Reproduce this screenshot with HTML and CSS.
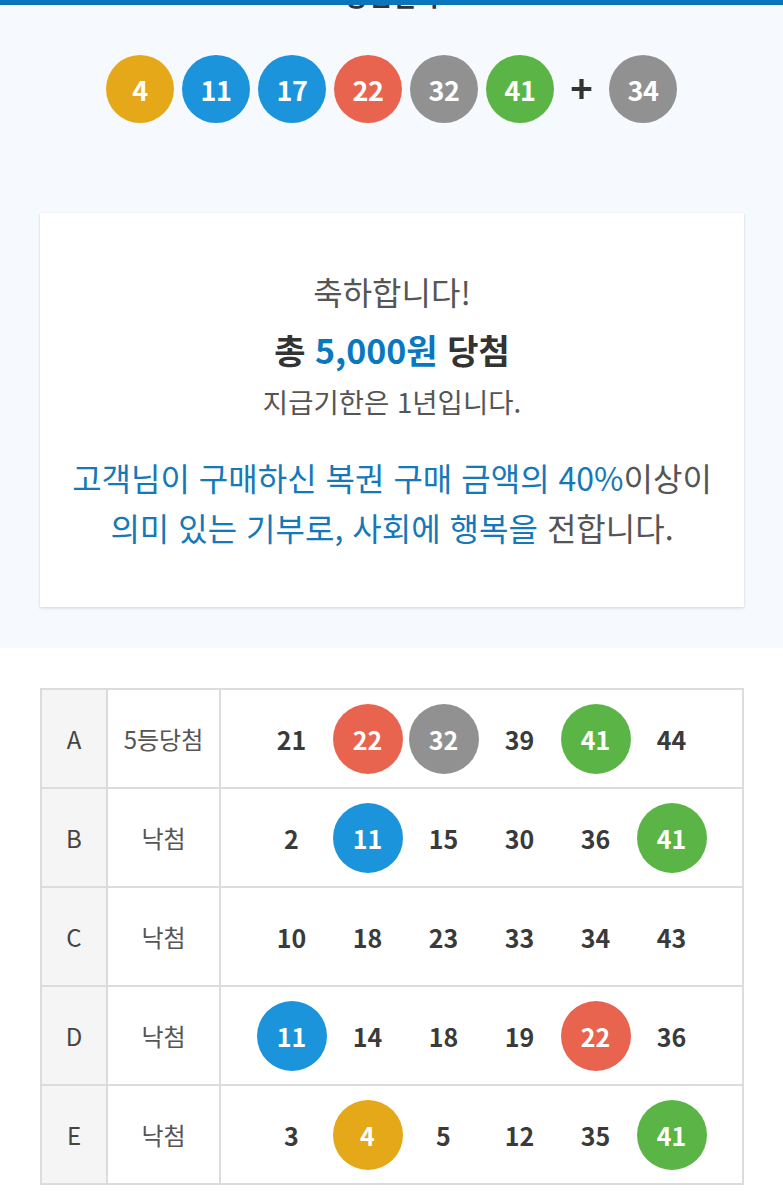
FILE: index.html
```html
<!DOCTYPE html>
<html lang="ko">
<head>
<meta charset="utf-8">
<title>당첨결과</title>
<link rel="stylesheet" href="styles.css">
</head>
<body>
<div class="topbar"></div>
<section class="result">
  <h2 class="title">당첨결과</h2>
  <div class="balls">
    <span class="ball c1">4</span>
    <span class="ball c2">11</span>
    <span class="ball c2">17</span>
    <span class="ball c3">22</span>
    <span class="ball c4">32</span>
    <span class="ball c5">41</span>
    <span class="plus">+</span>
    <span class="ball c4">34</span>
  </div>
  <div class="card">
    <p class="congrats">축하합니다!</p>
    <p class="total">총 <span class="amount">5,000원</span> 당첨</p>
    <p class="limit">지급기한은 1년입니다.</p>
    <p class="donate"><span class="blue">고객님이 구매하신 복권 구매 금액의 40%</span>이상이<br><span class="blue">의미 있는 기부로, 사회에 행복을</span> 전합니다.</p>
  </div>
</section>
<section class="tickets">
  <table class="ticket-table">
    <colgroup><col class="col-id"><col class="col-rank"><col></colgroup>
    <tr>
      <td class="id">A</td><td class="rank">5등당첨</td>
      <td><div class="nums"><span class="slot">21</span><span class="slot"><span class="mini c3">22</span></span><span class="slot"><span class="mini c4">32</span></span><span class="slot">39</span><span class="slot"><span class="mini c5">41</span></span><span class="slot">44</span></div></td>
    </tr>
    <tr>
      <td class="id">B</td><td class="rank">낙첨</td>
      <td><div class="nums"><span class="slot">2</span><span class="slot"><span class="mini c2">11</span></span><span class="slot">15</span><span class="slot">30</span><span class="slot">36</span><span class="slot"><span class="mini c5">41</span></span></div></td>
    </tr>
    <tr>
      <td class="id">C</td><td class="rank">낙첨</td>
      <td><div class="nums"><span class="slot">10</span><span class="slot">18</span><span class="slot">23</span><span class="slot">33</span><span class="slot">34</span><span class="slot">43</span></div></td>
    </tr>
    <tr>
      <td class="id">D</td><td class="rank">낙첨</td>
      <td><div class="nums"><span class="slot"><span class="mini c2">11</span></span><span class="slot">14</span><span class="slot">18</span><span class="slot">19</span><span class="slot"><span class="mini c3">22</span></span><span class="slot">36</span></div></td>
    </tr>
    <tr>
      <td class="id">E</td><td class="rank">낙첨</td>
      <td><div class="nums"><span class="slot">3</span><span class="slot"><span class="mini c1">4</span></span><span class="slot">5</span><span class="slot">12</span><span class="slot">35</span><span class="slot"><span class="mini c5">41</span></span></div></td>
    </tr>
  </table>
</section>
</body>
</html>
```
FILE: styles.css
```css
* { box-sizing: border-box; }
html, body { margin: 0; padding: 0; }
body {
  font-family: "Noto Sans CJK KR", "Noto Sans", sans-serif;
  color: #333;
  background: #fff;
  overflow: hidden;
}
.topbar {
  position: absolute;
  top: 0; left: 0; right: 0;
  height: 5px;
  background: #0a75bd;
  z-index: 2;
}
.result {
  background: #f6f9fd;
  padding: 0 39px 41px 40px;
  overflow: hidden;
}
.title {
  margin: -22px 0 0;
  font-size: 26px;
  line-height: 34px;
  font-weight: 700;
  text-align: center;
  color: #333;
}
.balls {
  display: flex;
  justify-content: center;
  align-items: center;
  gap: 8px;
  margin-top: 43px;
  margin-left: -1px;
}
.ball {
  width: 68px; height: 68px;
  border-radius: 50%;
  display: flex; align-items: center; justify-content: center;
  color: #fff;
  font-size: 27px;
  font-weight: 700;
  letter-spacing: -0.5px;
}
.plus {
  width: 39px;
  text-align: center;
  font-size: 38px;
  font-weight: 700;
  color: #333;
  line-height: 1;
  margin-top: -4px;
}
.c1 { background: #e5a818; }
.c2 { background: #1b94db; }
.c3 { background: #e8644f; }
.c4 { background: #919191; }
.c5 { background: #5bb546; }
.card {
  margin-top: 90px;
  background: #fff;
  box-shadow: 0 1px 3px rgba(0,0,0,0.16);
  padding: 56px 10px 55px;
  text-align: center;
}
.card p { margin: 0; }
.congrats {
  font-size: 32px;
  line-height: 44px;
  color: #555;
}
.total {
  margin-top: 15px !important;
  font-size: 34px;
  line-height: 44px;
  font-weight: 700;
  color: #333;
}
.amount { color: #0a78bf; }
.limit {
  margin-top: 12px !important;
  font-size: 27.5px;
  line-height: 34px;
  color: #555;
}
.donate {
  margin-top: 34px !important;
  font-size: 32px;
  line-height: 50px;
  color: #555;
}
.blue { color: #1478b9; }
.tickets {
  padding: 40px 39px 0 40px;
}
.ticket-table {
  width: 704px;
  border-collapse: collapse;
  border: 2px solid #dcdcdc;
}
.col-id { width: 66px; }
.col-rank { width: 113px; }
.ticket-table td {
  border: 2px solid #dcdcdc;
  height: 99px;
  padding: 0;
  text-align: center;
  vertical-align: middle;
}
.ticket-table td.id {
  background: #f5f5f5;
  font-size: 24px;
  color: #444;
}
.ticket-table td.rank {
  font-size: 24px;
  color: #555;
}
.nums {
  display: flex;
  justify-content: center;
  align-items: center;
}
.slot {
  width: 76px;
  height: 70px;
  display: flex;
  align-items: center;
  justify-content: center;
  font-size: 25px;
  font-weight: 700;
  color: #3a3a3a;
}
.mini {
  width: 70px; height: 70px;
  border-radius: 50%;
  display: flex; align-items: center; justify-content: center;
  color: #fff;
  font-size: 25px;
  font-weight: 700;
}
```
